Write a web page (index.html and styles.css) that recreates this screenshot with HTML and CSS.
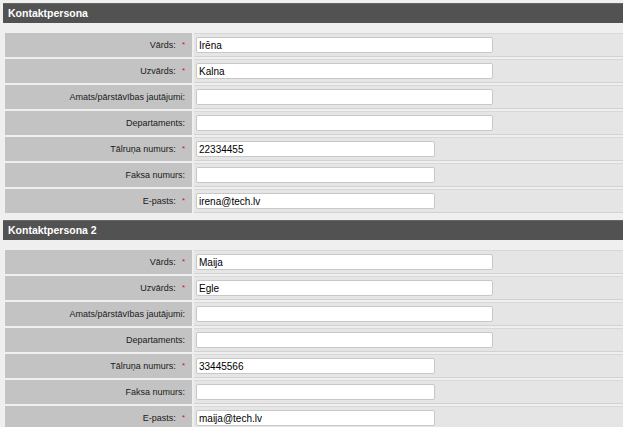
FILE: index.html
```html
<!DOCTYPE html>
<html>
<head>
<meta charset="utf-8">
<link rel="stylesheet" href="styles.css">
</head>
<body>
<div class="page">
  <div class="section-head">Kontaktpersona</div>
  <table class="form">
    <tr><td class="lbl">Vārds:<span class="req">*</span></td><td class="val"><input class="inp long" value="Irēna"></td></tr>
    <tr><td class="lbl">Uzvārds:<span class="req">*</span></td><td class="val"><input class="inp long" value="Kalna"></td></tr>
    <tr><td class="lbl">Amats/pārstāvības jautājumi:</td><td class="val"><input class="inp long" value=""></td></tr>
    <tr><td class="lbl">Departaments:</td><td class="val"><input class="inp long" value=""></td></tr>
    <tr><td class="lbl">Tālruņa numurs:<span class="req">*</span></td><td class="val"><input class="inp short" value="22334455"></td></tr>
    <tr><td class="lbl">Faksa numurs:</td><td class="val"><input class="inp short" value=""></td></tr>
    <tr><td class="lbl">E-pasts:<span class="req">*</span></td><td class="val"><input class="inp short" value="irena@tech.lv"></td></tr>
  </table>
  <div class="section-head">Kontaktpersona 2</div>
  <table class="form">
    <tr><td class="lbl">Vārds:<span class="req">*</span></td><td class="val"><input class="inp long" value="Maija"></td></tr>
    <tr><td class="lbl">Uzvārds:<span class="req">*</span></td><td class="val"><input class="inp long" value="Egle"></td></tr>
    <tr><td class="lbl">Amats/pārstāvības jautājumi:</td><td class="val"><input class="inp long" value=""></td></tr>
    <tr><td class="lbl">Departaments:</td><td class="val"><input class="inp long" value=""></td></tr>
    <tr><td class="lbl">Tālruņa numurs:<span class="req">*</span></td><td class="val"><input class="inp short" value="33445566"></td></tr>
    <tr><td class="lbl">Faksa numurs:</td><td class="val"><input class="inp short" value=""></td></tr>
    <tr><td class="lbl">E-pasts:<span class="req">*</span></td><td class="val"><input class="inp short" value="maija@tech.lv"></td></tr>
  </table>
</div>
</body>
</html>
```
FILE: styles.css
```css
html, body {
  margin: 0;
  padding: 0;
  background: #efefef;
  overflow: hidden;
}
body {
  font-family: "Liberation Sans", Arial, sans-serif;
  font-size: 9px;
  color: #1a1a1a;
}
.page {
  padding: 3px 0 0 3px;
  width: 640px;
}
.section-head {
  background: #525252;
  border-top: 1px solid #666;
  height: 19px;
  line-height: 19px;
  color: #fff;
  font-weight: bold;
  font-size: 10.5px;
  padding-left: 5px;
  margin-bottom: 8px;
}
.form {
  border-collapse: separate;
  border-spacing: 2px;
  width: 100%;
  margin-bottom: 5px;
}
.form td {
  height: 24px;
  padding: 0;
  vertical-align: middle;
}
.lbl {
  width: 180px;
  background: #c3c3c3;
  text-align: right;
  padding-right: 7px !important;
  color: #1a1a1a;
  white-space: nowrap;
}
.val {
  background: #e5e5e5;
  box-shadow: inset 0 -1px 0 #d2d2d2, inset 0 1px 0 #d8d8d8;
  padding-left: 2px !important;
}
.req {
  color: #d11;
  font-size: 8px;
  margin-left: 6px;
  position: relative;
  top: -1px;
}
.inp {
  display: block;
  box-sizing: border-box;
  height: 16px;
  border: 1px solid #c8c8c8;
  border-radius: 2px;
  background: #fff;
  font-family: "Liberation Sans", Arial, sans-serif;
  font-size: 10px;
  color: #000;
  padding: 0 2px;
  margin: 0;
}
.long { width: 297px; }
.short { width: 239px; }
```
